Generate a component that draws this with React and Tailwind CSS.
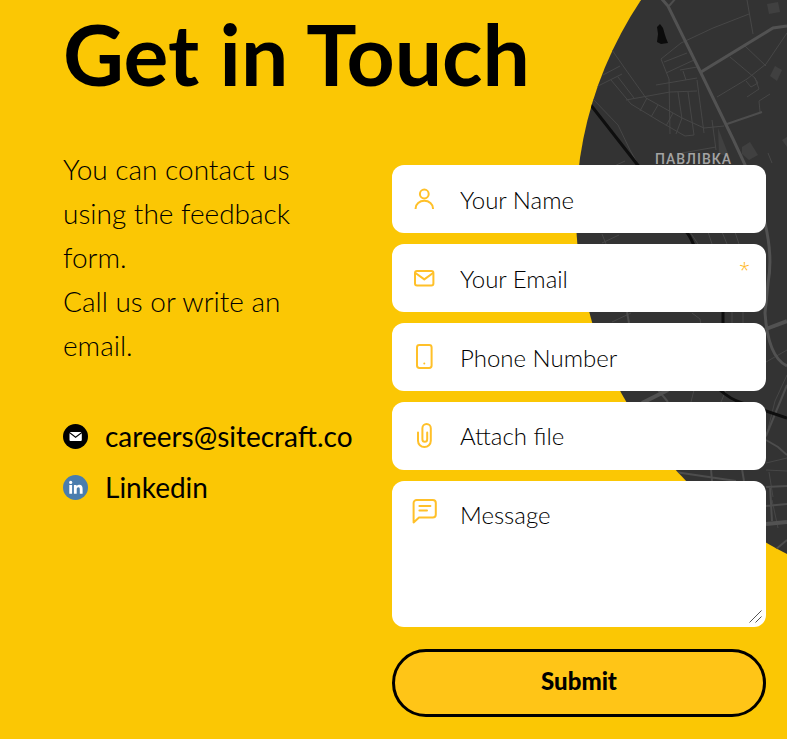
function MapCircle() {
  return (
    <svg
      className="absolute top-0 left-[576px] h-[594px] w-[calc(100%-576px)]"
      viewBox="576 0 211 594"
      preserveAspectRatio="xMinYMin slice"
      aria-hidden="true"
    >
      <defs>
        <clipPath id="disc">
          <circle cx="957" cy="213" r="381" />
        </clipPath>
      </defs>
      <g clipPath="url(#disc)" fill="none">
        <rect x="576" y="0" width="762" height="594" fill="#333333" />

        <g fill="#404040">
          <path d="M767 4l11-2 2 10-11 2z" />
          <path d="M775 66l7 4-5 11-7-5z" />
          <path d="M742 147l8-5 8 13-9 5-7-6z" />
          <path d="M718 128l11 28-10-2z" />
          <path d="M782 140l5-3v10z" />
        </g>
        <path d="M660 24l3 4 2 7 1 3 2 5-7 1-4-2 1-8-1-7z" fill="#0b0b0b" />

        <g stroke="#474747" strokeWidth="1">
          <path d="M747 0l6 34M749 14l-36 14-32 15-20 16 8 20 1 55" />
          <path d="M664 62l23-9M666 73l28-13M680 70l17-3M683 71l3 9M656 85l41-7" />
          <path d="M612 50l14 20 20 28 36 20 22 10 20-2" />
          <path d="M596 87l26-13M603 75l17-9M611 80l20 24 28 17 26 15 9-1" />
          <path d="M618 77l16 21M626 100l44-8 27-1M647 98l-7 13M658 105l-7 12M673 113l-7 13M682 118l-6 16" />
          <path d="M678 92l4 27M688 92l6 43M697 80l7 53" />
          <path d="M717 97l30-18 19-15 21-31M730 57l25 21M745 46l21 20M746 81l5 6 7-4-4-6M755 78l4 11-12 8M770 94l-11 7 1 11" />
          <path d="M592 98l26 27 12 25 10 18M682 153l34-6M712 120l4 30M610 168l15-7M768 153l4 10" />
          <path d="M602 234l4 10M619 235l-17 8M690 232l8 12M708 232l4 12M722 232l5 12M735 232l4 12" />
          <path d="M612 322l19-9M692 313l8 6 1 6M732 312v11M743 312v11M766 362l21-12M787 375l-12 26-9 36M694 390l-3 12M726 390l-5 12" />
          <path d="M766 463l21-5M766 470l21 1M769 472l4 25M772 500l6 28" />
        </g>

        <g stroke="#4d4d4d" strokeWidth="2">
          <path d="M669 6l7-8M727 124l35-12" />
          <path d="M627 312l2 11M658 390l10 12M766 440l12 7 9 8" />
          <path d="M675 472l61 9M711 469l1 12M742 469l2 12M766 487l21-1M770 486l2 35M766 506l21-2M787 540l-12 10M787 385l-21 51" />
        </g>

        <g stroke="#525252" strokeWidth="3">
          <path d="M661-2l7 8 32 65 33 68 14 30 18 54q8 34 3 60l-3 30q3 44 22 53" />
          <path d="M701 72l72-44 14-2" />
          <path d="M766 329l21-8M642 403l26-13M766 524l21-2" strokeWidth="4" />
        </g>

        <g stroke="#0e0e0e" strokeWidth="3">
          <path d="M590 104l50 64 38 56q15 10 20 36" />
          <path d="M723 312v34l-3 44q10 9 22 13l45 15" />
        </g>
      </g>
      <text x="655" y="164" fill="#a3a3a3" className="font-['Roboto',sans-serif] text-[14px] font-medium tracking-[1px]">
        ПАВЛІВКА
      </text>
    </svg>
  );
}

const icon = {
  className: "pointer-events-none absolute left-[20px] size-6 text-[#ffc029]",
  viewBox: "0 0 24 24",
  fill: "none",
  stroke: "currentColor",
  strokeWidth: 2,
  strokeLinecap: "round",
  strokeLinejoin: "round",
  "aria-hidden": true,
};

function UserIcon() {
  return (
    <svg {...icon}>
      <circle cx="12.3" cy="7" r="4.4" />
      <path d="M3.6 22v-.6a8.700 7.600 0 0 1 17.400 0v.6" strokeLinecap="butt" />
    </svg>
  );
}

function MailIcon() {
  return (
    <svg {...icon}>
      <rect x="3" y="5" width="18.4" height="14.6" rx="2" />
      <path d="M3.8 7.2l8.5 6.2 8.4-6.2" />
    </svg>
  );
}

function PhoneIcon() {
  return (
    <svg {...icon} overflow="visible">
      <rect x="5" y="0" width="14.6" height="23" rx="2.4" />
      <path d="M12.3 18.6h.01" />
    </svg>
  );
}

function ClipIcon() {
  return (
    <svg {...icon} overflow="visible">
      <path d="M6 8.600v8.200a6.400 6.200 0 0 0 12.800 0V4.200a4.200 4.300 0 0 0-8.400 0v11a2.400 2.500 0 0 0 4.800 0V8.600" />
    </svg>
  );
}

function MessageIcon() {
  return (
    <svg {...icon} overflow="visible">
      <path d="M1.600 23.400V4a3 3 0 0 1 3-3h16.200a3 3 0 0 1 3 3v11.400a3 3 0 0 1-3 3H7z" />
      <path d="M7.400 7h11M7.400 11.600h7.600" />
    </svg>
  );
}

const box =
  "block w-full rounded-xl bg-white pl-[68px] pr-8 text-2xl font-light text-black outline-none placeholder:text-black placeholder:opacity-100";

function Field({ id, type, label, required, children }) {
  return (
    <label htmlFor={id} className="relative flex items-center">
      <input
        id={id}
        type={type}
        placeholder={label}
        aria-label={label}
        required={required}
        className={`${box} h-[68px]`}
      />
      {children}
      {required && (
        <span
          className="absolute top-2 right-4 font-['Open_Sans',sans-serif] text-xl leading-9 font-light text-[#ffb81c]"
          aria-hidden="true"
        >
          *
        </span>
      )}
    </label>
  );
}

export default function App() {
  return (
    <main className="relative min-h-screen overflow-hidden bg-[#fbc704] pr-[21px] pb-[22px] pl-[63px] font-['Lato',sans-serif] text-black">
      <MapCircle />
      <div className="relative">
        <h1 className="pt-[6px] pb-[3px] text-[84px] leading-[96px] font-bold">Get in Touch</h1>
        <div className="flex pt-[60px]">
          <section className="-mt-[18px] w-[329px] shrink-0">
            <p className="w-[250px] text-[28px] leading-[44px] font-light">
              You can contact us using the feedback form.
              <br />
              Call us or write an email.
            </p>
            <ul className="mt-[49px] flex flex-col gap-[11px] text-[28px] leading-10">
              <li>
                <a href="mailto:careers@sitecraft.co" className="flex items-center gap-[17px]">
                  <svg className="size-[25px] shrink-0" viewBox="0 0 25 25" aria-hidden="true">
                    <circle cx="12.500" cy="12.500" r="12.500" />
                    <path
                      d="M6.700 8h11.800l-5.900 4.400zM6.500 9.300l6.100 4.600 6.200-4.600v6.700a1 1 0 0 1-1 1H7.500a1 1 0 0 1-1-1z"
                      fill="#fff"
                    />
                  </svg>
                  careers@sitecraft.co
                </a>
              </li>
              <li>
                <a href="#linkedin" className="flex items-center gap-[17px]">
                  <svg className="size-[25px] shrink-0" viewBox="0 0 25 25" aria-hidden="true">
                    <circle cx="12.500" cy="12.500" r="12.500" fill="#4a7dae" />
                    <g fill="#fff">
                      <circle cx="7.700" cy="7.400" r="1.600" />
                      <path d="M6.300 10h2.800v8.800H6.300zM10.900 10h2.700v1.200q.9-1.400 2.700-1.400c2.700 0 3.300 1.800 3.300 4.200v4.800h-2.800v-4.300c0-1 0-2.300-1.400-2.300s-1.700 1.100-1.700 2.200v4.400h-2.800z" />
                    </g>
                  </svg>
                  Linkedin
                </a>
              </li>
            </ul>
          </section>

          <form className="flex min-w-0 flex-1 flex-col gap-[11px]" onSubmit={(e) => e.preventDefault()}>
            <Field id="name" type="text" label="Your Name"><UserIcon /></Field>
            <Field id="email" type="email" label="Your Email" required><MailIcon /></Field>
            <Field id="phone" type="tel" label="Phone Number"><PhoneIcon /></Field>
            <div className="relative flex items-center">
              <label htmlFor="file" className={`${box} h-[68px] leading-[68px]`}>Attach file</label>
              <input id="file" type="file" className="absolute inset-0 cursor-pointer text-[0px] opacity-0" />
              <ClipIcon />
            </div>
            <label htmlFor="message" className="relative flex">
              <textarea
                id="message"
                placeholder="Message"
                aria-label="Message"
                className={`${box} h-[146px] resize-none py-[18px] leading-8`}
              />
              <span className="pointer-events-none absolute top-[18px] left-0"><MessageIcon /></span>
              <svg
                className="pointer-events-none absolute right-1 bottom-1 size-[13px]"
                viewBox="0 0 13 13"
                stroke="#555"
                aria-hidden="true"
              >
                <path d="M.5 12.500l12-12M6.500 12.500l6-6" />
              </svg>
            </label>
            <button
              type="submit"
              className="mt-[11px] h-[68px] w-full rounded-full border-[3px] border-black bg-[#ffc517] pb-1 text-2xl font-black"
            >
              Submit
            </button>
          </form>
        </div>
      </div>
    </main>
  );
}
